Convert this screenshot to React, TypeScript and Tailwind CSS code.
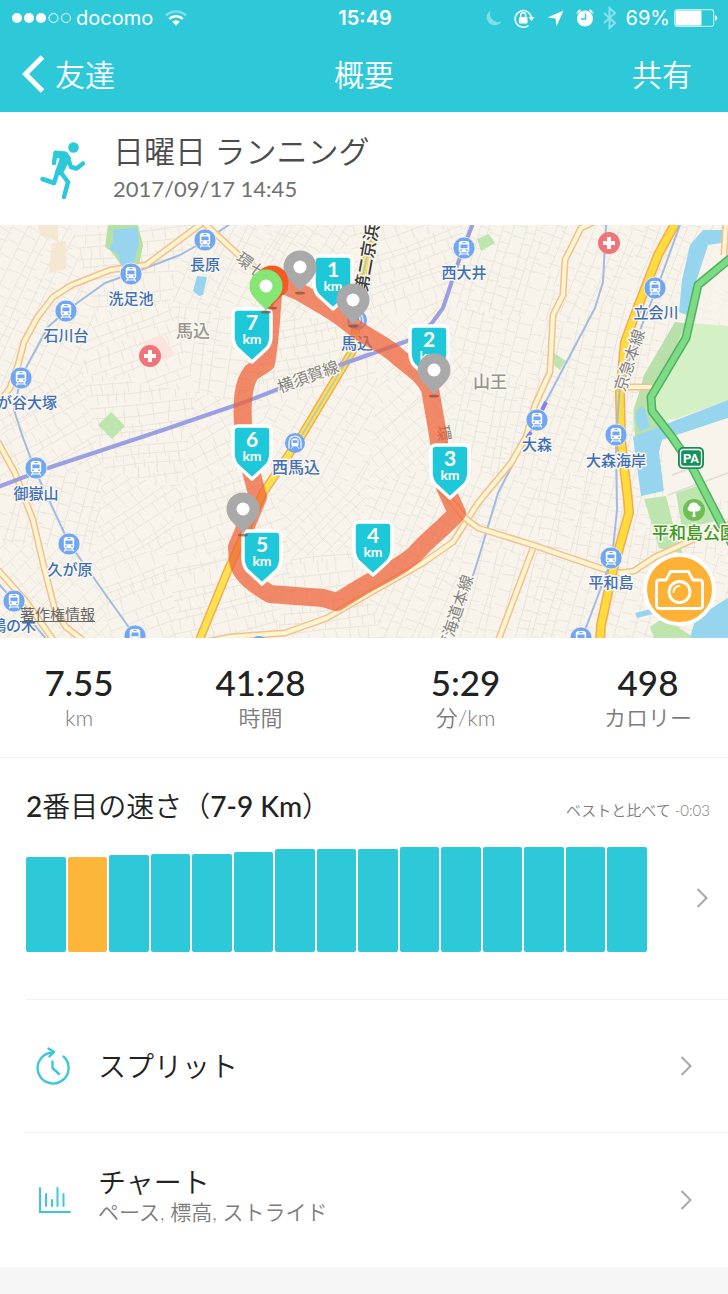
import React from "react";

const FONT = "font-['Lato','Noto_Sans_CJK_JP',sans-serif]";

type Point = [number, number];

/* Deterministic pseudo random numbers, so that the street grid is stable. */
function makeRandom(seed: number) {
  let s = seed;
  return () => {
    s = (s * 16807) % 2147483647;
    return s / 2147483647;
  };
}

type District = { id: string; outline: string; path: string };

function buildDistricts(): District[] {
  const rnd = makeRandom(4217);
  const cols = 8;
  const rows = 5;
  const w = 728 / cols;
  const h = 413 / rows;
  const corner: Point[][] = [];
  for (let r = 0; r <= rows; r++) {
    corner.push([]);
    for (let c = 0; c <= cols; c++) {
      corner[r].push([
        c * w + (c > 0 && c < cols ? (rnd() - 0.5) * 44 : 0),
        r * h + (r > 0 && r < rows ? (rnd() - 0.5) * 40 : 0),
      ]);
    }
  }
  const out: District[] = [];
  for (let r = 0; r < rows; r++) {
    for (let c = 0; c < cols; c++) {
      const quad = [corner[r][c], corner[r][c + 1], corner[r + 1][c + 1], corner[r + 1][c]];
      const cx = (c + 0.5) * w;
      const cy = (r + 0.5) * h;
      const angle = c > 4 ? rnd() * 0.3 + 0.1 : rnd() * 1.5;
      const cos = Math.cos(angle);
      const sin = Math.sin(angle);
      const at = (u: number, v: number) =>
        `${(cx + u * cos - v * sin).toFixed(1)} ${(cy + u * sin + v * cos).toFixed(1)}`;
      let d = "";
      for (let u = -90; u < 90; u += 8 + rnd() * 7) {
        const bend = (rnd() - 0.5) * 10;
        d += `M${at(u, -90)}L${at(u + bend, 0)}L${at(u, 90)}`;
        for (let v = -90 + rnd() * 8; v < 90; v += 8 + rnd() * 10) {
          d += `M${at(u, v)}L${at(u + 12, v + (rnd() - 0.5) * 3)}`;
        }
      }
      out.push({
        id: `district-${r}-${c}`,
        outline: quad.map((p) => p.map((n) => n.toFixed(1)).join(",")).join(" "),
        path: d,
      });
    }
  }
  return out;
}

const DISTRICTS = buildDistricts();

type RoadProps = { points: string; width: number; fill: string; edge: string };

function Road({ points, width, fill, edge }: RoadProps) {
  return (
    <g fill="none" strokeLinejoin="round">
      <polyline points={points} stroke={edge} strokeWidth={width + 3} />
      <polyline points={points} stroke={fill} strokeWidth={width} />
    </g>
  );
}

const PALE_ROADS = [
  "205,-4 146,40 110,45 72,60 53,72 37,93 24,117 18,140 10,163 -4,182",
  "203,-3 245,36 285,62",
  "-2,217 15,248 33,295 43,338 55,385 66,402 84,416",
  "-2,345 25,375 54,416",
  "205,417 230,412 285,408 327,393 370,368 423,338 453,317 467,295 478,278 511,238 526,212 535,180 550,147 553,90 563,70 565,35 581,3 596,-4",
  "533,323 498,416",
  "440,262 465,293 478,303 533,320 600,343 620,348 634,346 655,332 690,316 732,298",
  "622,162 652,162",
  "726,-2 724,30",
];

const STATIONS: Point[] = [
  [205, 15], [131, 49], [66, 86], [21, 153], [36, 243], [69, 319], [14, 376], [135, 411],
  [464, 23], [655, 63], [537, 195], [616, 210], [611, 333], [581, 413],
];

function TrainIcon({ x, y }: { x: number; y: number }) {
  return (
    <g transform={`translate(${x} ${y})`}>
      <circle r="11" fill="#70a6f2" stroke="#f8f4ec" strokeWidth="0.8" />
      <path d="M-3.2-7h6.4l2 1.6v8.2q0 1.4-1.4 1.4h-7.6q-1.4 0-1.4-1.4v-8.2z" fill="#fff" />
      <rect x="-1.8" y="-6" width="3.6" height="1.1" rx=".5" fill="#70a6f2" />
      <rect x="-3.6" y="-3.6" width="7.2" height="3.8" rx=".5" fill="#70a6f2" />
      <circle cx="-3" cy="2.2" r=".9" fill="#70a6f2" />
      <circle cx="3" cy="2.2" r=".9" fill="#70a6f2" />
      <path d="M-3 4.4 -4.8 7.4M3 4.4 4.8 7.4M-4 6h8" stroke="#fff" strokeWidth="1.2" />
    </g>
  );
}

function SubwayIcon({ x, y }: { x: number; y: number }) {
  return (
    <g transform={`translate(${x} ${y})`}>
      <circle r="10" fill="#70a6f2" />
      <path d="M-6 5.500v-6.500a6 6 0 0 1 12 0v6.500" fill="none" stroke="#fff" strokeWidth="1.200" />
      <rect x="-3.500" y="-4.500" width="7" height="8" rx="2" fill="#fff" />
      <rect x="-2.300" y="-2.800" width="4.600" height="2.800" fill="#70a6f2" />
      <path d="M-2.500 3.500-4 5.800M2.500 3.500 4 5.800" stroke="#fff" />
    </g>
  );
}

type Label = { text: string; x: number; y: number; tone: string; rotate?: number; anchor?: "start" | "middle" | "end" };

const LABELS: Label[] = [
  { text: "長原", x: 205, y: 45, tone: "station" },
  { text: "洗足池", x: 131, y: 79, tone: "station" },
  { text: "石川台", x: 66, y: 116, tone: "station" },
  { text: "が谷大塚", x: 57, y: 183, tone: "station", anchor: "end" },
  { text: "御嶽山", x: 36, y: 274, tone: "station" },
  { text: "久が原", x: 70, y: 350, tone: "station" },
  { text: "鵜の木", x: 36, y: 406, tone: "station", anchor: "end" },
  { text: "西大井", x: 464, y: 53, tone: "station" },
  { text: "立会川", x: 656, y: 93, tone: "station" },
  { text: "大森", x: 537, y: 225, tone: "station" },
  { text: "大森海岸", x: 616, y: 241, tone: "station" },
  { text: "平和島", x: 611, y: 363, tone: "station" },
  { text: "西馬込", x: 296, y: 248, tone: "subway" },
  { text: "馬込", x: 357, y: 124, tone: "subway" },
  { text: "馬込", x: 193, y: 112, tone: "area" },
  { text: "山王", x: 490, y: 163, tone: "area" },
  { text: "平和島公園", x: 652, y: 314, tone: "park", anchor: "start" },
  { text: "横須賀線", x: 310, y: 157, tone: "line", rotate: -20 },
  { text: "京急本線", x: 635, y: 137, tone: "line", rotate: -72 },
  { text: "東海道本線", x: 461, y: 390, tone: "line", rotate: -72 },
  { text: "第二京浜", x: 373, y: 34, tone: "road", rotate: -80 },
  { text: "環七通り", x: 260, y: 55, tone: "line", rotate: 38 },
  { text: "環七", x: 437, y: 201, tone: "faint", rotate: 82, anchor: "start" },
];

const TONES: Record<string, string> = {
  station: "fill-[#3f6fb5] stroke-[#faf7f1] text-[15px] font-medium",
  subway: "fill-[#4470b4] stroke-[#faf7f1] text-[16px] font-medium",
  area: "fill-[#98948f] stroke-[#faf7f1] text-[17px] font-medium",
  park: "fill-[#3c9a1e] stroke-[#faf7f1] text-[17px] font-medium",
  line: "fill-[#85827e] stroke-[#faf7f1] text-[16px]",
  faint: "fill-[#85827e] stroke-none text-[16px]",
  road: "fill-[#3d3b38] stroke-[#faf7f1] text-[17px] font-medium",
};

function MapLabel({ text, x, y, tone, rotate = 0, anchor = "middle" }: Label) {
  return (
    <text
      className={TONES[tone]}
      textAnchor={anchor}
      strokeWidth="3"
      strokeLinejoin="round"
      paintOrder="stroke"
      transform={rotate ? `translate(${x} ${y}) rotate(${rotate})` : `translate(${x} ${y})`}
    >
      {text}
    </text>
  );
}

const ROUTE =
  "M275 56L300 67C318 78 332 84 350 99S385 119 397 131C412 144 424 150 430 164L438 210 445 262 457 288C444 303 430 312 417 327 405 340 380 351 363 361L337 377 323 373 270 369C255 360 240 350 238 336L237 322 253 284 258 272 248 235 243 200C242 180 242 158 252 147L266 138C270 120 272 80 274 56";

const KM_MARKS: { n: number; x: number; y: number }[] = [
  { n: 1, x: 333, y: 32 },
  { n: 2, x: 429, y: 102 },
  { n: 3, x: 450, y: 221 },
  { n: 4, x: 373, y: 298 },
  { n: 5, x: 262, y: 307 },
  { n: 6, x: 252, y: 202 },
  { n: 7, x: 252, y: 85 },
];

function KmMark({ n, x, y }: { n: number; x: number; y: number }) {
  return (
    <g transform={`translate(${x} ${y})`}>
      <path
        d="M-14-1h28q5 0 5 5v22q0 10-7 15L0 52-12 41q-7-5-7-15V4q0-5 5-5z"
        fill="#1fc8d8"
        stroke="#fff"
        strokeWidth="3.500"
        strokeLinejoin="round"
      />
      <text textAnchor="middle" y="20" className="fill-white text-[21px] font-bold">{n}</text>
      <text textAnchor="middle" y="34" className="fill-white text-[14px] font-bold">km</text>
    </g>
  );
}

function Pin({ x, y, color }: { x: number; y: number; color: string }) {
  return (
    <g transform={`translate(${x} ${y})`}>
      <ellipse cy="26" rx="5" ry="1.500" fill="#8a4a38" opacity=".7" />
      <path d="M0 25C-4 17-16.500 12-16.500 0a16.500 16.500 0 0 1 33 0C16.500 12 4 17 0 25z" fill={color} />
      <circle r="6.500" fill="#fff" />
    </g>
  );
}

function RouteMap() {
  return (
    <svg viewBox="0 0 728 413" className="block h-auto w-full bg-[#f8f4ec]" role="img" aria-label="ルート">
      <defs>
        {DISTRICTS.map((d) => (
          <clipPath id={d.id} key={d.id}>
            <polygon points={d.outline} />
          </clipPath>
        ))}
      </defs>
      {DISTRICTS.map((d) => (
        <path key={d.id} clipPath={`url(#${d.id})`} d={d.path} fill="none" stroke="#e8e5dc" strokeWidth="1" />
      ))}

      {/* land use */}
      <path d="M38 0h20v16l-18-6zM52 18l14-2v28l-17 4z" fill="#f6e7d2" />
      <path d="M142 118l20-8 12 18-14 8z" fill="#fbe4e0" />
      <path d="M108 0h30l5 20-4 20h-18l-10-14-6-4z" fill="#b7e0a4" />
      <path d="M113 5l24-3 2 15-5 21-13 3-3-12-9-5 4-8z" fill="#97d5ef" />
      <path d="M197 51l10 1-4 18-4 1-6-5z" fill="#97d5ef" />
      <path d="M98 200l13-13 14 14-13 13z" fill="#bfe5ae" />
      <path d="M477 14l12-5 6 9-14 8z" fill="#bfe5ae" />
      <path d="M554 128l12 8-6 9-6-5z" fill="#bfe5ae" />
      <path d="M675 97l53 4v74l-95 32v-22l12-33z" fill="#d3f1c4" />
      <path d="M675 97l15 1-10 30-29 44-1 17 14 15-29 9-1-28 10-35z" fill="#b9dfab" />
      <path d="M700 8h28v90h-50z" fill="#f8f4ec" opacity=".7" />
      <path d="M686 98l42 3v74l-52 19-22-20z" fill="#d3f1c4" />
      <path d="M703 5h25v12l-20 3-13 40-8 30-8-3 3-32 8-35z" fill="#97d5ef" />
      <path d="M633 212l95-37v18l-66 22-3 12 5 39-23 5z" fill="#97d5ef" />
      <path d="M637 186q4-7 8-2l5 18-10 4-5-12z" fill="#97d5ef" />
      <path d="M662 215l66-22v80l-64 0z" fill="#f8f4ec" />
      <path d="M668 270l60-22M672 250l30-11M700 270l28 40" stroke="#dedcd4" fill="none" strokeWidth="1.500" />
      <path d="M644 274l22-3 7 28 10 30-24-6zM676 268l30-10 10 38-34 8z" fill="#bfe5ae" />
      <path d="M650 402l14-10 30 21h-40z" fill="#bfe5ae" />
      <path d="M635 388l16-4 6 4-20 5zM695 395l23-16 10-6v40h-38z" fill="#97d5ef" />

      {/* minor railways */}
      <g fill="none" stroke="#a2bbe0" strokeWidth="2" strokeLinejoin="round">
        <polyline points="233,-3 205,16 180,30 130,49 105,58 66,86 48,102 21,152 14,185 22,210 35,245 69,318 135,411" />
        <polyline points="606,0 603,57 595,83 545,178 537,195 515,235 498,268 478,335 452,416" />
        <polyline points="-2,358 14,376 48,416" />
      </g>

      {PALE_ROADS.map((points) => (
        <Road key={points} points={points} width={4} fill="#fdf5cf" edge="#f3c08f" />
      ))}
      <Road points="375,-3 363,50 353,125 302,210 263,268 228,345 199,416" width={6} fill="#ffe04d" edge="#f0ad55" />
      <path d="M375-3 363 50 353 125 302 210" fill="none" stroke="#b9cbb8" strokeWidth="2" />
      <Road
        points="676,-3 658,30 636,87 625,117 620,167 621,215 628,275 629,288 613,345 601,400 600,416"
        width={7}
        fill="#ffdc3c"
        edge="#f2ab54"
      />
      <polyline
        points="681,-3 660,55 642,100 620,160 616,215 617,285 612,333 584,408"
        fill="none"
        stroke="#a2bbe0"
        strokeWidth="2"
      />
      <Road points="732,32 698,60 686,113 651,172 652,186 672,212 691,240 735,325" width={6} fill="#7ddb84" edge="#4cb160" />

      {/* main railway */}
      <g fill="none" stroke="#9a9fe2" strokeWidth="4" strokeLinejoin="round">
        <polyline points="-2,262 48,243 163,205 245,177 340,140 410,115 432,98 443,83 458,38 473,-2" />
        <path d="M546 177l-4 8M531 207l-4 6" stroke="#8583ef" />
      </g>

      {/* points of interest */}
      {STATIONS.map(([x, y]) => (
        <TrainIcon key={`${x}-${y}`} x={x} y={y} />
      ))}
      <SubwayIcon x={295} y={218} />
      <SubwayIcon x={357} y={95} />
      <circle cx="259" cy="421" r="10" fill="#70a6f2" />
      {[[150, 131], [609, 18]].map(([x, y]) => (
        <g key={x} transform={`translate(${x} ${y})`}>
          <circle r="11" fill="#f0747a" />
          <path d="M-6 0H6M0-6V6" stroke="#fff" strokeWidth="4" />
        </g>
      ))}
      <g transform="translate(694 285)">
        <circle r="11" fill="#6fbf56" />
        <path d="M-1.500 7l.5-5.500c-5 1-7-3-4-5C-5-8 3-9 4.500-4.500 9-3 6 2.500 1 1.500L1.500 7z" fill="#fff" />
      </g>
      <g transform="translate(691 233)">
        <rect x="-13" y="-11" width="26" height="22" rx="5" fill="#14905a" />
        <rect x="-10.500" y="-8.500" width="21" height="17" rx="3" fill="none" stroke="#fff" strokeWidth="1.300" />
        <text textAnchor="middle" y="5" className="fill-white font-['Roboto'] text-[13px] font-bold">PA</text>
      </g>
      {LABELS.map((l) => (
        <MapLabel key={`${l.text}-${l.x}`} {...l} />
      ))}

      <path d={ROUTE} fill="none" stroke="#ee5f35" strokeOpacity=".72" strokeWidth="18" strokeLinejoin="round" />

      {KM_MARKS.map((m) => (
        <KmMark key={m.n} {...m} />
      ))}
      <Pin x={300} y={42} color="#a9a9a9" />
      <Pin x={353} y={75} color="#a9a9a9" />
      <Pin x={434} y={145} color="#a9a9a9" />
      <Pin x={243} y={284} color="#a9a9a9" />
      <Pin x={272} y={57} color="#f55a23" />
      <Pin x={266} y={61} color="#86e673" />
    </svg>
  );
}

function StatusBar() {
  return (
    <div className="grid h-9 grid-cols-[1fr_auto_1fr] items-center pl-3 pr-2.5 text-white font-['Inter','Noto_Sans_CJK_JP',sans-serif]">
      <div className="flex items-center gap-1">
        <svg width="60" height="12" viewBox="0 0 60 12" aria-hidden="true">
          <g fill="#fff">
            <circle cx="5" cy="6" r="5" />
            <circle cx="17" cy="6" r="5" />
            <circle cx="29" cy="6" r="5" />
          </g>
          <g fill="none" stroke="#fff" strokeWidth="1">
            <circle cx="41.500" cy="6" r="4.500" />
            <circle cx="54" cy="6" r="4.500" />
          </g>
        </svg>
        <span className="text-xl leading-6">docomo</span>
        <svg width="22" height="16" viewBox="0 0 22 16" className="ml-2" aria-hidden="true">
          <g fill="none" stroke="#fff" strokeWidth="2.600">
            <path d="M1 5.500a14.500 14.500 0 0 1 20 0" opacity=".4" />
            <path d="M4.300 9a9.700 9.700 0 0 1 13.400 0" />
          </g>
          <path d="M7.200 11.800a5.400 5.400 0 0 1 7.600 0L11 15.800z" fill="#fff" />
        </svg>
      </div>
      <time className="text-xl font-semibold leading-6">15:49</time>
      <div className="flex items-center justify-end gap-2">
        <svg width="17" height="18" viewBox="0 0 17 18" aria-hidden="true">
          <path d="M5.500 1.500A8 8 0 1 0 16.500 12.500 8.500 8.500 0 0 1 5.500 1.500z" fill="#fff" opacity=".4" />
        </svg>
        <svg width="21" height="19" viewBox="0 0 21 19" className="ml-1" aria-hidden="true">
          <path d="M14.500 16.500A8.300 8.300 0 1 1 17.500 8" fill="none" stroke="#fff" strokeWidth="1.500" />
          <path d="M14.500 8h6l-3 4z" fill="#fff" />
          <rect x="5" y="8" width="8.500" height="6.500" rx=".8" fill="#fff" />
          <path d="M6.700 8.500V6.300a2.500 2.500 0 0 1 5 0v2.200" fill="none" stroke="#fff" strokeWidth="1.400" />
        </svg>
        <svg width="17" height="17" viewBox="0 0 17 17" className="ml-1" aria-hidden="true">
          <path d="M16.500.500 9.500 16.500 8.500 8.500 .500 7.500z" fill="#fff" />
        </svg>
        <svg width="18" height="18" viewBox="0 0 18 18" className="ml-1" aria-hidden="true">
          <circle cx="9" cy="9.500" r="8" fill="#fff" />
          <path d="M1 4.500A9 9 0 0 1 4.500 1M17 4.500A9 9 0 0 0 13.500 1" fill="none" stroke="#fff" strokeWidth="1.500" />
          <path d="M9.500 4.500V10H5" fill="none" stroke="#2dc9d9" strokeWidth="1.400" />
        </svg>
        <svg width="16" height="24" viewBox="0 0 16 24" aria-hidden="true">
          <path d="M2 7l11 10-5.500 5V2L13 7 2 17" fill="none" stroke="#fff" strokeWidth="2" opacity=".45" />
        </svg>
        <span className="text-xl leading-6">69%</span>
        <svg width="44" height="18" viewBox="0 0 44 18" className="-ml-1" aria-hidden="true">
          <rect x=".7" y=".7" width="39" height="16.600" rx="2.500" fill="none" stroke="#fff" strokeWidth="1.200" opacity=".65" />
          <rect x="1.500" y="1.500" width="26" height="15" rx="1" fill="#fff" />
          <path d="M41 6q2.500 1 2.500 3T41 12z" fill="#fff" opacity=".8" />
        </svg>
      </div>
    </div>
  );
}

function Chevron() {
  return (
    <svg width="12" height="20" viewBox="0 0 12 20" className="shrink-0" aria-hidden="true">
      <path d="M1.500 1l9 9-9 9" fill="none" stroke="#a8a8a8" strokeWidth="2" />
    </svg>
  );
}

const STATS = [
  { value: "7.55", unit: "km" },
  { value: "41:28", unit: "時間" },
  { value: "5:29", unit: "分/km" },
  { value: "498", unit: "カロリー" },
];

const SPLITS = [95, 95, 97, 98, 98, 100, 103, 103, 103, 105, 105, 105, 105, 105, 105];
const HIGHLIGHTED = 1;

export default function App() {
  return (
    <div className={`min-h-screen w-full bg-[#f6f6f6] ${FONT}`} lang="ja">
      <header className="bg-[#2dc9d9] text-white">
        <StatusBar />
        <nav className="grid h-19 grid-cols-3 items-center pl-5.5 pr-9 text-3xl font-[350]">
          <a href="#friends" className="flex items-center gap-2.5">
            <svg width="23" height="38" viewBox="0 0 23 38" aria-hidden="true">
              <path d="M20.500 2 3.500 19l17 17" fill="none" stroke="#fff" strokeWidth="5" />
            </svg>
            友達
          </a>
          <h1 className="pl-3.5 text-center">概要</h1>
          <a href="#share" className="text-right">共有</a>
        </nav>
      </header>

      <main className="bg-white">
        <section className="flex h-[113px] items-center pl-[39px]">
          <svg width="48" height="60" viewBox="0 0 48 60" className="mt-1 shrink-0" aria-hidden="true">
            <circle cx="34.500" cy="6.500" r="5.300" fill="#2dc9d9" />
            <path d="M16 10.500 27 11.500 31 17 23.500 31 21 33.500 17 31 22 17 15 15z" fill="#2dc9d9" stroke="#2dc9d9" strokeWidth="2" strokeLinejoin="round" />
            <g fill="none" stroke="#2dc9d9" strokeWidth="4.500" strokeLinecap="round" strokeLinejoin="round">
              <path d="M15 22 16.500 12 27 13.500" />
              <path d="M28.500 16l3.500 10 5.500 1.500 6.500-5" />
              <path d="M19 29.500 15 42 3.500 38" />
              <path d="M21.500 31l7.500 10-4 15" />
            </g>
          </svg>
          <div className="flex flex-col pl-6.5">
            <h2 className="text-[31px] font-[350] leading-10 text-[#4c4c4c]">日曜日 ランニング</h2>
            <time className="text-[22px] leading-9 text-[#707070]">2017/09/17 14:45</time>
          </div>
        </section>

        <section className="relative">
          <RouteMap />
          <a href="#copyright" className="absolute bottom-3.5 left-5 text-[15px] leading-5 text-[#666] underline">
            著作権情報
          </a>
          <button
            type="button"
            aria-label="写真を追加"
            className="absolute bottom-3 right-3 flex size-[73px] items-center justify-center rounded-full border-4 border-white bg-[#fdb235]"
          >
            <svg width="49" height="42" viewBox="0 0 49 42" fill="none" stroke="#fff" strokeWidth="2.800" strokeLinejoin="round" aria-hidden="true">
              <path d="M4.500 11H11l4.500-8.500h18L38 11h6.500q3 0 3 3v22.500q0 3-3 3h-40q-3 0-3-3V14q0-3 3-3z" />
              <circle cx="24.500" cy="23" r="10.500" />
              <path d="M18.500 23a6 6 0 0 1 6-6" strokeWidth="1.800" strokeLinecap="round" />
            </svg>
          </button>
        </section>

        <section className="grid h-30 grid-cols-[158px_1fr_1fr_160px] items-center border-b border-[#f2f2f2]">
          {STATS.map((s) => (
            <div key={s.unit} className="flex flex-col items-center">
              <span className="text-[35px] font-medium leading-10 text-[#222]">{s.value}</span>
              <span className="text-[22px] font-[350] leading-8 text-[#7c7c7c]">{s.unit}</span>
            </div>
          ))}
        </section>

        <section className="pl-6.5">
          <a href="#pace" className="block h-[242px] border-b border-[#f2f2f2] pr-4.5 pt-7">
            <div className="flex items-end justify-between">
              <h3 className="text-[28px] font-[350] leading-10 text-[#222]">
                <span className="font-medium">2</span>番目の速さ（<span className="font-medium">7-9 Km</span>）
              </h3>
              <span className="text-[15px] font-[350] leading-8 text-[#7c7c7c]">ベストと比べて -0:03</span>
            </div>
            <div className="mt-[18px] flex items-center justify-between pr-0.5">
              <div className="mr-[49px] flex h-27 flex-1 items-end gap-0.5">
                {SPLITS.map((height, i) => (
                  <div
                    key={i}
                    className={`flex-1 rounded-xs ${i === HIGHLIGHTED ? "bg-[#feb63a]" : "bg-[#2dc9d9]"}`}
                    style={{ height }}
                  />
                ))}
              </div>
              <Chevron />
            </div>
          </a>

          <a href="#splits" className="flex h-[133px] items-center border-b border-[#f2f2f2] pr-9">
            <svg width="52" height="38" viewBox="0 0 52 38" className="shrink-0" fill="none" stroke="#3cc8d9" strokeWidth="2.400" strokeLinecap="round" strokeLinejoin="round" aria-hidden="true">
              <path d="M37.500 9.500A15.500 15.500 0 1 1 27 5.500" />
              <path d="M22.500 1.500 28 5l-4.500 4.500" />
              <path d="M26.500 14.500v6.500l6.500 6" />
            </svg>
            <h3 className="flex-1 pl-5 text-[28px] font-[350] leading-10 text-[#222]">スプリット</h3>
            <Chevron />
          </a>

          <a href="#chart" className="flex h-[134px] items-center pr-9">
            <svg width="52" height="38" viewBox="0 0 52 38" className="shrink-0" fill="none" stroke="#3cc8d9" strokeWidth="2" strokeLinecap="round" aria-hidden="true">
              <path d="M14 7v24h30M20 13v12M26 19v6M31.500 7v18M37.500 13v12" />
            </svg>
            <div className="flex flex-1 flex-col pb-2 pl-5">
              <h3 className="text-[28px] font-[350] leading-8 text-[#222]">チャート</h3>
              <p className="text-[21px] font-[350] leading-7 text-[#7c7c7c]">ペース, 標高, ストライド</p>
            </div>
            <Chevron />
          </a>
        </section>
      </main>
    </div>
  );
}
